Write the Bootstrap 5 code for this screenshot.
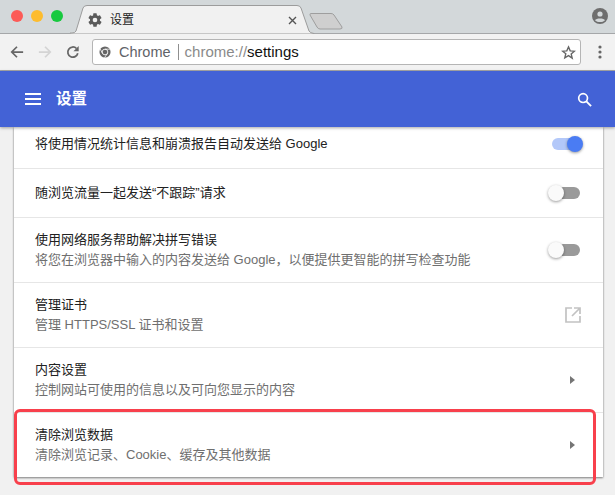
<!DOCTYPE html>
<html lang="zh-CN">
<head>
<meta charset="UTF-8">
<title>设置</title>
<link href="https://cdn.jsdelivr.net/npm/bootstrap@5.3.1/dist/css/bootstrap.min.css" rel="stylesheet">
<script src="https://cdn.jsdelivr.net/npm/bootstrap@5.3.1/dist/js/bootstrap.bundle.min.js"></script>
<style>
html, body { width: 615px; height: 495px; overflow: hidden; }
body { background: #f1f1f1; font-family: "Liberation Sans", "Noto Sans CJK SC", sans-serif; color: #212121; position: relative; }
.tabbar { height: 34px; background: #d3d8da; border-bottom: 1px solid #a5a7a9; position: relative; }
.light { width: 12px; height: 12px; border-radius: 50%; }
.lights { padding: 10px 0 0 11px; gap: 8px; }
.tab-shape { position: absolute; left: 70px; top: 4px; }
.tab-gear { position: absolute; left: 87px; top: 12px; }
.tab-title { position: absolute; left: 110px; top: 11px; font-size: 12px; line-height: 18px; color: #222; }
.tab-close { position: absolute; left: 288px; top: 16px; }
.new-tab { position: absolute; left: 309px; top: 12px; }
.profile { position: absolute; left: 592px; top: 8px; }
.toolbar { height: 37px; background: #f2f2f2; border-bottom: 1px solid #a8a8a8; padding-left: 10px; }
.nav-ic { width: 14px; height: 14px; display: block; flex: none; }
.nav-gap { gap: 14px; }
.omni { position: absolute; left: 92px; top: 39px; width: 489px; height: 26px; background: #fff; border: 1px solid #b5b5b5; border-radius: 3px; font-size: 14.5px; line-height: 24px; padding-left: 6px; }
.omni-sep { width: 1px; height: 16px; background: #8f8f8f; margin: 0 6px 0 7px; }
.url-dim { color: #8a8a8a; font-size: 15px; }
.url-main { color: #111; font-size: 15px; }
.url-chrome { color: #5f6368; }
.menu-dots { position: absolute; left: 598px; top: 45px; }
.appbar { height: 56px; background: #4362d6; color: #fff; box-shadow: 0 1px 3px rgba(0,0,0,.35); position: relative; padding-left: 25px; }
.appbar-title { font-size: 15.5px; font-weight: 700; margin-left: 15px; }
.search-ic { position: absolute; left: 577px; top: 21px; }
.panel { width: 589px; margin-left: 14px; background: #fff; box-shadow: 0 1px 2px rgba(0,0,0,.45), 0 0 2px rgba(0,0,0,.12); }
.set-row { padding: 0 22px 0 21px; border-top: 1px solid #e6e6e6; }
.set-row:first-child { border-top: 0; }
.h-a { height: 41px; padding-bottom: 7px; }
.h-b { height: 49px; }
.h-c { height: 65px; }
.set-main { font-size: 13px; line-height: 18px; color: #212121; }
.set-sub { font-size: 13px; line-height: 18px; color: #6f6f6f; margin-top: 2px; }
.sw { position: relative; width: 28px; height: 12px; border-radius: 6px; background: #9a9a9a; flex: none; margin-right: 1px; }
.sw::after { content: ""; position: absolute; left: -4px; top: -2px; width: 16px; height: 16px; border-radius: 50%; background: #fafafa; box-shadow: 0 1px 3px rgba(0,0,0,.4); }
.sw-on { background: #b3c8f9; }
.sw-on::after { left: 15px; background: #4a7cf3; }
.caret-ic { width: 0; height: 0; border-left: 5px solid #757575; border-top: 4.5px solid transparent; border-bottom: 4.5px solid transparent; margin-right: 6px; }
.hilite { position: absolute; left: 14px; top: 409px; width: 582px; height: 76px; border: 3px solid #f8404c; border-radius: 6px; }
</style>
</head>
<body>
<div class="tabbar">
  <div class="d-flex lights">
    <div class="light" style="background:#fc5b57"></div>
    <div class="light" style="background:#fdbc2e"></div>
    <div class="light" style="background:#18c93f"></div>
  </div>
  <svg class="tab-shape" width="246" height="30"><path d="M0 30V29H2Q5 29 6 27L13 4Q14 1.500 17 1.500H227Q230 1.500 231 4L239 27Q240 29 244 29.500V30Z" fill="#f1f1f1" stroke="#9c9c9c"/></svg>
  <svg class="tab-gear" width="16" height="16" viewBox="0 0 24 24"><path fill="#5a5a5a" d="M19.400 13c.04-.33.06-.66.06-1s-.02-.67-.06-1l2.100-1.650c.19-.15.240-.420.120-.640l-2-3.460c-.12-.220-.390-.300-.610-.220l-2.490 1c-.52-.4-1.080-.73-1.690-.98l-.38-2.650A.49.490 0 0 0 14 2h-4c-.25 0-.46.180-.49.420l-.38 2.650c-.61.250-1.170.590-1.690.980l-2.490-1c-.23-.090-.49 0-.61.220l-2 3.460c-.13.220-.07.490.12.640L4.570 11c-.04.33-.07.670-.07 1s.03.670.07 1l-2.110 1.650c-.19.150-.24.420-.12.640l2 3.460c.12.220.39.300.61.220l2.490-1c.52.400 1.080.730 1.690.980l.38 2.650c.03.240.24.420.49.420h4c.25 0 .46-.18.49-.42l.38-2.650c.61-.25 1.170-.59 1.690-.98l2.490 1c.23.090.49 0 .61-.22l2-3.460c.12-.22.07-.49-.12-.64zM12 15.500a3.500 3.500 0 1 1 0-7 3.500 3.500 0 0 1 0 7z"/></svg>
  <div class="tab-title">设置</div>
  <svg class="tab-close" width="9" height="9"><path d="M1 1L8 8M8 1L1 8" stroke="#555" stroke-width="1.400"/></svg>
  <svg class="new-tab" width="34" height="18"><path d="M1.500 1.500H22Q24 1.500 25 3L33 15Q33.500 17 31 17H11Q9 17 8 15L1 3Q1 1.500 1.500 1.500Z" fill="#cfcfcf" stroke="#9e9e9e"/></svg>
  <svg class="profile" width="16" height="16" viewBox="0 0 16 16"><circle cx="8" cy="8" r="8" fill="#6e6e6e"/><circle cx="8" cy="6" r="2.600" fill="#d3d8da"/><path d="M3 12.200C4 9.900 12 9.900 13 12.200C11.800 13.500 10 14 8 14S4.200 13.500 3 12.200Z" fill="#d3d8da"/></svg>
</div>
<div class="toolbar d-flex align-items-center nav-gap">
  <svg class="nav-ic" viewBox="0 0 16 16"><path d="M15 8H2M8 2L2 8L8 14" fill="none" stroke="#666" stroke-width="2"/></svg>
  <svg class="nav-ic" viewBox="0 0 16 16"><path d="M1 8H14M8 2L14 8L8 14" fill="none" stroke="#d4d4d4" stroke-width="2"/></svg>
  <svg class="nav-ic" viewBox="0 0 16 16"><path d="M13.500 9.500A5.800 5.800 0 1 1 12 4" fill="none" stroke="#666" stroke-width="2"/><path d="M14.500 1V7H8.500Z" fill="#666"/></svg>
</div>
<div class="omni d-flex align-items-center">
  <svg width="12" height="12" viewBox="0 0 14 14" class="me-1 flex-shrink-0"><circle cx="7" cy="7" r="6.500" fill="#666"/><circle cx="7" cy="7" r="3.300" fill="#666" stroke="#fff" stroke-width="1"/><path d="M7 3.700H13M4 8.700L1.500 3.500M9.900 8.700L6.500 13.500" stroke="#fff" stroke-width=".9"/></svg>
  <span class="url-chrome ms-1">Chrome</span><span class="omni-sep"></span><span class="url-dim">chrome://</span><span class="url-main">settings</span>
  <svg class="ms-auto me-1" width="15" height="15" viewBox="0 0 24 24"><path d="M12 3l2.700 6.300 6.800.600-5.200 4.500 1.600 6.700L12 17l-5.900 3.600 1.600-6.700L2.500 9.900l6.800-.600z" fill="none" stroke="#666" stroke-width="2.200"/></svg>
</div>
<svg class="menu-dots" width="4" height="14"><circle cx="2" cy="2" r="1.600" fill="#666"/><circle cx="2" cy="7" r="1.600" fill="#666"/><circle cx="2" cy="12" r="1.600" fill="#666"/></svg>
<div class="appbar d-flex align-items-center">
  <svg width="16" height="12"><path d="M0 1H16M0 6H16M0 11H16" stroke="#fff" stroke-width="2"/></svg>
  <span class="appbar-title">设置</span>
  <svg class="search-ic" width="15" height="15" viewBox="0 0 16 16"><circle cx="6.500" cy="6.500" r="4.700" fill="none" stroke="#fff" stroke-width="1.800"/><path d="M10 10L15 15" stroke="#fff" stroke-width="2"/></svg>
</div>
<div class="panel">
  <div class="set-row h-a d-flex align-items-center justify-content-between">
    <div class="set-main">将使用情况统计信息和崩溃报告自动发送给 Google</div>
    <div class="sw sw-on"></div>
  </div>
  <div class="set-row h-b d-flex align-items-center justify-content-between">
    <div class="set-main">随浏览流量一起发送“不跟踪”请求</div>
    <div class="sw"></div>
  </div>
  <div class="set-row h-c d-flex align-items-center justify-content-between">
    <div><div class="set-main">使用网络服务帮助解决拼写错误</div><div class="set-sub">将您在浏览器中输入的内容发送给 Google，以便提供更智能的拼写检查功能</div></div>
    <div class="sw"></div>
  </div>
  <div class="set-row h-c d-flex align-items-center justify-content-between">
    <div><div class="set-main">管理证书</div><div class="set-sub">管理 HTTPS/SSL 证书和设置</div></div>
    <svg width="16" height="16" viewBox="0 0 16 16"><path d="M7 1H1V15H15V9M9 1H15V7M15 1L7 9" fill="none" stroke="#c2c2c2" stroke-width="1.700"/></svg>
  </div>
  <div class="set-row h-c d-flex align-items-center justify-content-between">
    <div><div class="set-main">内容设置</div><div class="set-sub">控制网站可使用的信息以及可向您显示的内容</div></div>
    <div class="caret-ic"></div>
  </div>
  <div class="set-row h-c d-flex align-items-center justify-content-between">
    <div><div class="set-main">清除浏览数据</div><div class="set-sub">清除浏览记录、Cookie、缓存及其他数据</div></div>
    <div class="caret-ic"></div>
  </div>
</div>
<div class="hilite"></div>
</body>
</html>
